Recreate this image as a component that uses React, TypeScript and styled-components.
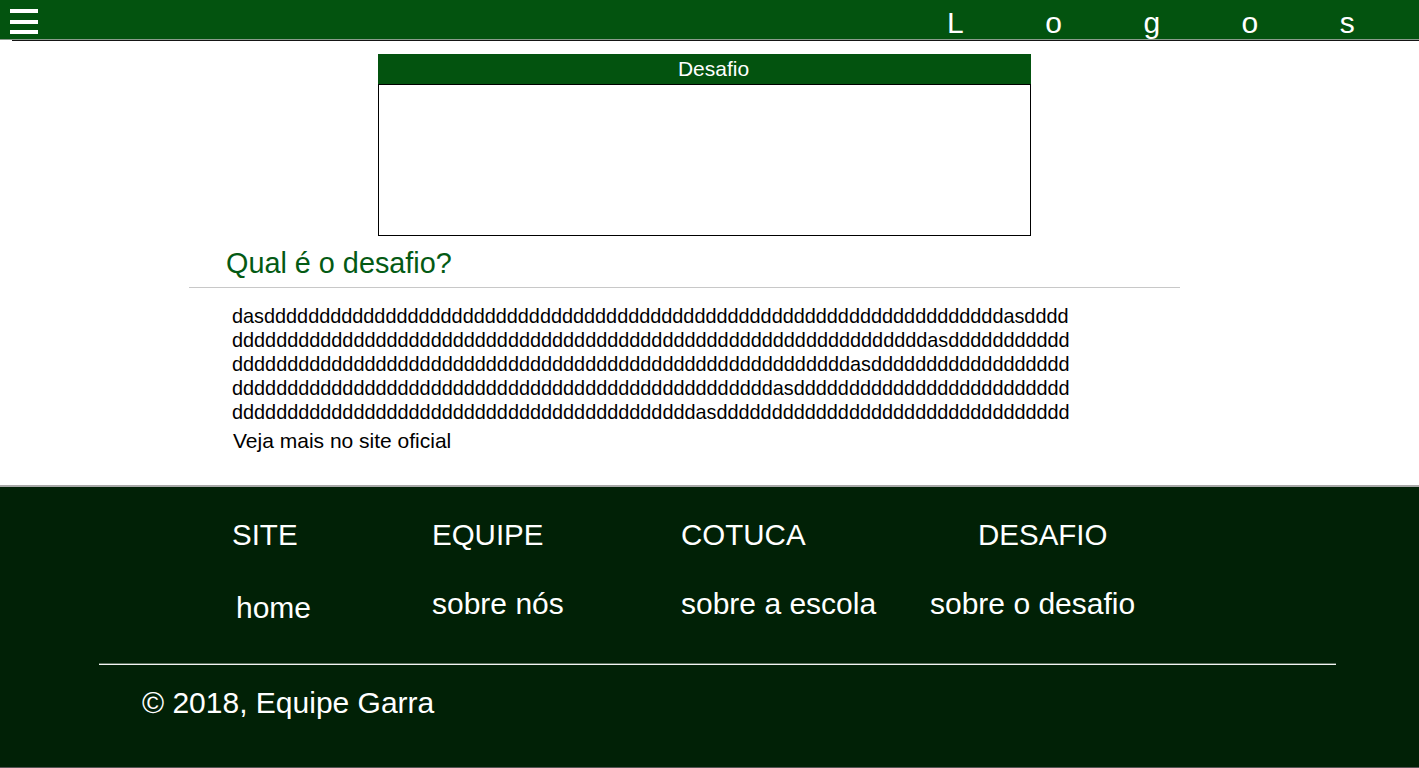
import React from "react";
import styled, { createGlobalStyle } from "styled-components";

const GREEN = "#03530f";
const DARK = "#012106";

const Global = createGlobalStyle`
  html, body { margin: 0; padding: 0; background: #fff; }
  body { font-family: "Liberation Sans", Arial, sans-serif; color: #000; }
  * { box-sizing: border-box; }
`;

const Header = styled.header`
  height: 40px;
  background: ${GREEN};
  border-bottom: 1px solid #8a9c8c;
  display: flex;
  align-items: flex-start;
  padding-left: 10px;
  overflow: hidden;
  white-space: nowrap;
`;

const Burger = styled.button`
  display: flex;
  flex-direction: column;
  gap: 6.5px;
  padding: 9px 0 0;
  margin: 0;
  border: 0;
  background: transparent;
  cursor: pointer;
`;

const BurgerBar = styled.span`
  display: block;
  width: 28px;
  height: 4px;
  background: #fff;
`;

const Logo = styled.div`
  margin-left: 909px;
  padding-top: 8px;
  display: flex;
  gap: 81.5px;
  font-size: 30px;
  line-height: 30px;
  color: #fff;
`;

const LogoLetter = styled.span`
  display: block;
`;

const HeaderRule = styled.div`
  margin-left: 12px;
  height: 1px;
  background: #151515;
`;

const Main = styled.main`
  margin-left: 189px;
  width: 991px;
  padding-top: 13px;
  padding-bottom: 32px;
`;

const Card = styled.section`
  margin-left: 189px;
  width: 653px;
`;

const CardHeader = styled.div`
  height: 30px;
  line-height: 30px;
  background: ${GREEN};
  color: #fff;
  font-size: 21px;
  text-align: center;
  padding-left: 18px;
`;

const CardBody = styled.div`
  height: 152px;
  border: 1px solid #000;
`;

const Title = styled.h2`
  margin: 11px 0 7px;
  padding-left: 37px;
  font-size: 28.8px;
  font-weight: normal;
  line-height: normal;
  color: #045a14;
`;

const Rule = styled.div`
  height: 1px;
  background: #c8c8c8;
`;

const Body = styled.p`
  margin: 16px 0 0 43px;
  width: 842px;
  font-size: 19.85px;
  line-height: 24px;
  word-break: break-all;
`;

const More = styled.p`
  margin: 5px 0 0 44px;
  font-size: 21px;
  line-height: normal;
`;

const Footer = styled.footer`
  height: 283px;
  background: ${DARK};
  border-top: 2px solid #a8a8a8;
  border-bottom: 1px solid #555;
  color: #fff;
  padding-top: 31px;
`;

const FooterGrid = styled.div`
  margin-left: 232px;
  display: grid;
  grid-template-columns: 200px 249px 249px 260px;
  row-gap: 35px;
`;

const ColTitle = styled.div<{ $indent?: number }>`
  font-size: 29.5px;
  line-height: normal;
  padding-left: ${(p) => p.$indent ?? 0}px;
`;

const ColLink = styled.a<{ $dx?: number; $dy?: number }>`
  display: block;
  font-size: 30px;
  line-height: normal;
  color: #fff;
  text-decoration: none;
  padding-left: ${(p) => p.$dx ?? 0}px;
  padding-top: ${(p) => p.$dy ?? 0}px;
`;

const FooterRule = styled.div`
  margin: 38px 0 0 99px;
  width: 1237px;
  height: 2px;
  border-top: 1px solid #5b705d;
  background: #f4f4f4;
`;

const Copy = styled.div`
  margin: 21px 0 0 142px;
  font-size: 30px;
  line-height: normal;
`;

const buildText = () => {
  const run = "d".repeat(67);
  let s = "das";
  for (let i = 0; i < 5; i++) s += run + "as";
  return s + "d".repeat(32);
};

export default function App() {
  return (
    <>
      <Global />
      <Header>
        <Burger aria-label="menu">
          <BurgerBar />
          <BurgerBar />
          <BurgerBar />
        </Burger>
        <Logo>
          {"Logos".split("").map((c, i) => (
            <LogoLetter key={i}>{c}</LogoLetter>
          ))}
        </Logo>
      </Header>
      <HeaderRule />
      <Main>
        <Card>
          <CardHeader>Desafio</CardHeader>
          <CardBody />
        </Card>
        <Title>Qual é o desafio?</Title>
        <Rule />
        <Body>{buildText()}</Body>
        <More>Veja mais no site oficial</More>
      </Main>
      <Footer>
        <FooterGrid>
          <ColTitle>SITE</ColTitle>
          <ColTitle>EQUIPE</ColTitle>
          <ColTitle>COTUCA</ColTitle>
          <ColTitle $indent={48}>DESAFIO</ColTitle>
          <ColLink href="#" $dx={4} $dy={4}>home</ColLink>
          <ColLink href="#">sobre nós</ColLink>
          <ColLink href="#">sobre a escola</ColLink>
          <ColLink href="#">sobre o desafio</ColLink>
        </FooterGrid>
        <FooterRule />
        <Copy>© 2018, Equipe Garra</Copy>
      </Footer>
    </>
  );
}
